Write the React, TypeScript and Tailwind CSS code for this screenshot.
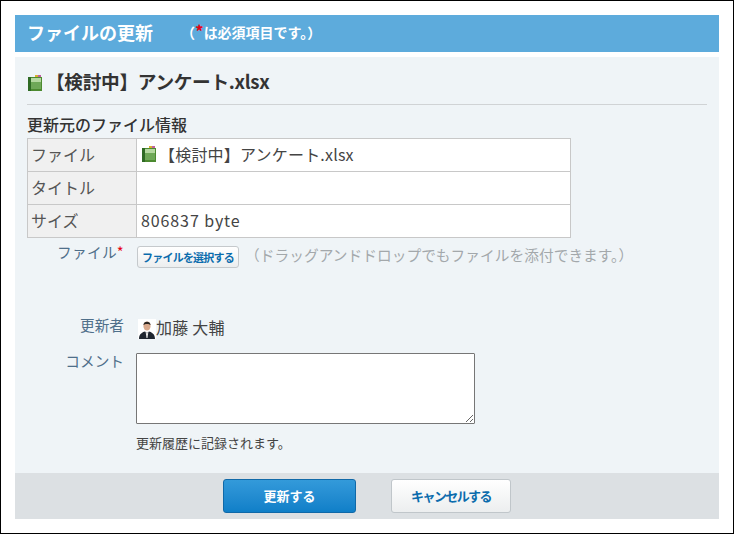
import React from 'react';

const XlsxIcon = () => (
  <svg width="16" height="16" viewBox="0 0 16 16" className="shrink-0">
    <rect x="8" y="0" width="3" height="3" fill="#d8b030" />
    <rect x="11" y="0" width="3" height="3" fill="#c060a0" />
    <rect x="1" y="2" width="14" height="14" fill="#4c8a30" />
    <rect x="1" y="2" width="3" height="14" fill="#2f6a24" />
    <rect x="4" y="3" width="10" height="4" fill="#b5d8a0" />
    <rect x="4" y="7" width="10" height="7" fill="#6fa858" />
  </svg>
);

const UserIcon = () => (
  <svg width="18" height="20" viewBox="0 0 18 20" className="shrink-0">
    <rect width="18" height="20" fill="#fff" />
    <ellipse cx="9" cy="7" rx="3.6" ry="4.6" fill="#d9a98c" />
    <path d="M5.4 6 C5.4 1.5 12.6 1.5 12.6 6 C11 4.5 7 4.5 5.4 6Z" fill="#2a2420" />
    <path d="M1 20 C1 14.5 5 13 7 12.5 L9 14 L11 12.5 C13 13 17 14.5 17 20Z" fill="#1f2630" />
    <path d="M7.6 12.6 L9 14.5 L10.4 12.6 L9.5 19 L8.5 19Z" fill="#e8e8e8" />
  </svg>
);

export default function App() {
  return (
    <div className="w-[734px] h-[534px] border border-black bg-white px-[14px] pt-[14px] font-['Noto_Sans_CJK_JP','Liberation_Sans',sans-serif] text-[#333]">
      <div className="h-[37px] bg-[#5dabdc] flex items-center pl-3 text-white">
        <h1 className="mb-[3px] text-[18px] font-bold leading-none">ファイルの更新</h1>
        <p className="ml-[28px] mb-[6px] text-[14px] font-bold leading-none whitespace-nowrap">
          （<span className="text-[17px] leading-none text-[#e60012]">*</span>は必須項目です。）
        </p>
      </div>

      <div className="mt-[5px] h-[416px] bg-[#eff4f7] px-3 pt-[13px]">
        <div className="h-[35px] flex items-start gap-[3px] border-b border-[#d0d3d5]">
          <div className="mt-[5px]">
            <XlsxIcon />
          </div>
          <span className="text-[18.67px] font-bold leading-[24px] -mt-[1px] tracking-[-0.3px]">【検討中】アンケート.xlsx</span>
        </div>

        <h2 className="mt-[9px] text-[16px] font-medium leading-[20px]">更新元のファイル情報</h2>

        <table className="mt-[4px] w-[544px] border-collapse text-[16px] table-fixed">
          <tbody>
            <tr className="h-[33px]">
              <th className="w-[109px] border border-[#c8c8c8] bg-[#f0f0f0] pl-[3px] pb-[2px] text-left font-normal text-[#555]">
                ファイル
              </th>
              <td className="border border-[#c8c8c8] bg-white pl-1 pb-[2px] text-[#444]">
                <div className="flex items-center gap-[2px] tracking-[0.2px]">
                  <XlsxIcon />
                  【検討中】アンケート.xlsx
                </div>
              </td>
            </tr>
            <tr className="h-[33px]">
              <th className="border border-[#c8c8c8] bg-[#f0f0f0] pl-[3px] pb-[2px] text-left font-normal text-[#555]">
                タイトル
              </th>
              <td className="border border-[#c8c8c8] bg-white pl-1 text-[#444]"></td>
            </tr>
            <tr className="h-[33px]">
              <th className="border border-[#c8c8c8] bg-[#f0f0f0] pl-[3px] pb-[2px] text-left font-normal text-[#555]">
                サイズ
              </th>
              <td className="border border-[#c8c8c8] bg-white pl-1 pb-[2px] text-[#444] tracking-[0.9px]">
                806837 byte
              </td>
            </tr>
          </tbody>
        </table>

        <div className="mt-[8px] h-[60px] flex items-start">
          <div className="w-[97px] text-right text-[14.67px] leading-[20px] text-[#4f6f8a] -mt-[4px] tracking-[0.3px]">
            ファイル<span className="text-[#e60012]">*</span>
          </div>
          <button className="ml-[13px] h-[22px] w-[102px] shrink-0 whitespace-nowrap rounded-[3px] border border-[#c5c9cc] bg-gradient-to-b from-white to-[#eceeef] text-[11px] font-bold text-[#0b6cad] leading-none tracking-[-0.8px]">
            ファイルを選択する
          </button>
          <span className="ml-[6px] -mt-[1px] whitespace-nowrap text-[14.67px] leading-[20px] text-[#a3a8ab] tracking-[0.07px]">（ドラッグアンドドロップでもファイルを添付できます。）</span>
        </div>

        <div className="mt-[9px] flex items-center h-[24px]">
          <div className="w-[97px] text-right text-[14.67px] text-[#4f6f8a] -mt-[4px]">更新者</div>
          <div className="ml-[14px] flex items-center text-[16px] text-[#444]">
            <div className="mt-[3px]">
              <UserIcon />
            </div>
            <span className="tracking-[0.2px]">加藤 大輔</span>
          </div>
        </div>

        <div className="mt-[14px] flex items-start">
          <div className="w-[97px] text-right text-[14.67px] leading-[20px] text-[#4f6f8a] -mt-[2px]">コメント</div>
          <div className="ml-[12px]">
            <textarea className="block h-[71px] w-[339px] border border-[#767676] bg-white rounded-[1px]" />
            <p className="mt-[11px] text-[13px] leading-[16px] text-[#444]">更新履歴に記録されます。</p>
          </div>
        </div>
      </div>

      <div className="h-[46px] bg-[#dce0e3] flex items-center">
        <button className="ml-[208px] h-[34px] w-[133px] rounded-[3px] border border-[#1069a8] bg-gradient-to-b from-[#339ada] to-[#0f7fc8] text-[13px] font-bold text-white">
          更新する
        </button>
        <button className="ml-[35px] h-[34px] w-[120px] rounded-[3px] border border-[#c0c6ca] bg-gradient-to-b from-white to-[#eceeef] text-[13px] font-bold text-[#0b6cad] tracking-[-1.6px]">
          キャンセルする
        </button>
      </div>
    </div>
  );
}
